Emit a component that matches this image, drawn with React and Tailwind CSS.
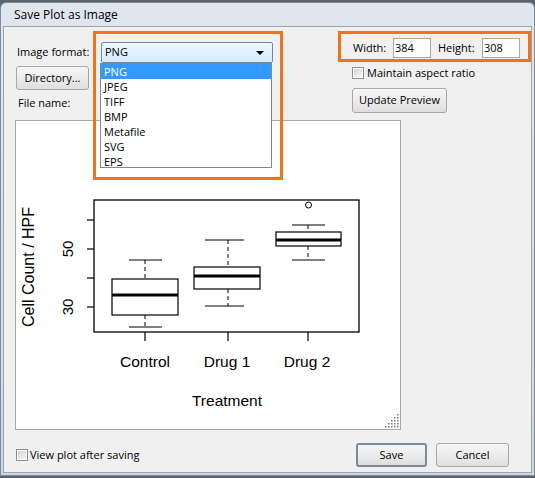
import React from "react";

const FONT = { fontFamily: '"Open Sans", "Noto Sans", sans-serif' };

function Btn({ children, className = "", def = false }) {
  return (
    <div
      className={
        "flex items-center justify-center rounded-[3px] text-[11px] text-black bg-gradient-to-b from-[#f6f6f6] via-[#ececec] to-[#dedede] " +
        (def ? "border-2 border-[#7d8a96] " : "border border-[#a7a7a7] ") +
        className
      }
    >
      {children}
    </div>
  );
}

function Check() {
  return (
    <div className="w-[12px] h-[12px] border border-[#8e8f8f] bg-white p-[1px] shrink-0">
      <div className="w-full h-full bg-gradient-to-br from-[#d4d4d4] to-[#f5f5f5]" />
    </div>
  );
}

function Plot() {
  const dash = "4 3";
  return (
    <svg
      width="384"
      height="308"
      viewBox="15 121 384 308"
      className="absolute left-0 top-0"
      style={{ fontFamily: '"Liberation Sans", Arial, sans-serif' }}
    >
      <rect x="93" y="200" width="265" height="132" fill="none" stroke="#000" strokeWidth="1.3" />
      {[220, 249, 278, 307].map((y) => (
        <line key={y} x1="86" y1={y} x2="93" y2={y} stroke="#000" strokeWidth="1.2" />
      ))}
      <text x="72" y="249" fontSize="15" textAnchor="middle" transform="rotate(-90 72 249)">50</text>
      <text x="72" y="307" fontSize="15" textAnchor="middle" transform="rotate(-90 72 307)">30</text>
      <text x="33" y="267" fontSize="16" textAnchor="middle" transform="rotate(-90 33 267)">Cell Count / HPF</text>
      {[144, 227, 307].map((x) => (
        <line key={x} x1={x} y1="332" x2={x} y2="341" stroke="#000" strokeWidth="1.2" />
      ))}
      <text x="144" y="367" fontSize="15.5" textAnchor="middle">Control</text>
      <text x="226" y="367" fontSize="15.5" textAnchor="middle">Drug 1</text>
      <text x="306" y="367" fontSize="15.5" textAnchor="middle">Drug 2</text>
      <text x="226" y="406" fontSize="15.5" textAnchor="middle">Treatment</text>

      {/* Control */}
      <line x1="144" y1="260" x2="144" y2="279" stroke="#000" strokeDasharray={dash} />
      <line x1="144" y1="315" x2="144" y2="327" stroke="#000" strokeDasharray={dash} />
      <line x1="128" y1="260" x2="161" y2="260" stroke="#000" />
      <line x1="128" y1="327" x2="161" y2="327" stroke="#000" />
      <rect x="111" y="279" width="66" height="36" fill="#fff" stroke="#000" strokeWidth="1.2" />
      <line x1="111" y1="295" x2="177" y2="295" stroke="#000" strokeWidth="3" />

      {/* Drug 1 */}
      <line x1="227" y1="240" x2="227" y2="267" stroke="#000" strokeDasharray={dash} />
      <line x1="227" y1="289" x2="227" y2="306" stroke="#000" strokeDasharray={dash} />
      <line x1="204" y1="240" x2="243" y2="240" stroke="#000" />
      <line x1="204" y1="306" x2="243" y2="306" stroke="#000" />
      <rect x="193" y="267" width="66" height="22" fill="#fff" stroke="#000" strokeWidth="1.2" />
      <line x1="193" y1="276" x2="259" y2="276" stroke="#000" strokeWidth="3" />

      {/* Drug 2 */}
      <line x1="307" y1="225" x2="307" y2="232" stroke="#000" strokeDasharray={dash} />
      <line x1="307" y1="246" x2="307" y2="260" stroke="#000" strokeDasharray={dash} />
      <line x1="291" y1="225" x2="324" y2="225" stroke="#000" />
      <line x1="291" y1="260" x2="324" y2="260" stroke="#000" />
      <rect x="275" y="232" width="65" height="14" fill="#fff" stroke="#000" strokeWidth="1.2" />
      <line x1="275" y1="240" x2="340" y2="240" stroke="#000" strokeWidth="3" />
      <circle cx="307.5" cy="205" r="3" fill="none" stroke="#000" strokeWidth="1" />

      {/* resize grip */}
      {[
        [396, 414], [393, 417], [396, 417], [390, 420], [393, 420], [396, 420],
        [387, 423], [390, 423], [393, 423], [396, 423], [384, 426], [387, 426],
        [390, 426], [393, 426], [396, 426],
      ].map(([x, y], i) => (
        <rect key={i} x={x} y={y} width="1.5" height="1.5" fill="#7a7a7a" />
      ))}
    </svg>
  );
}

export default function App() {
  const items = ["PNG", "JPEG", "TIFF", "BMP", "Metafile", "SVG", "EPS"];
  return (
    <div className="w-[535px] h-[478px] bg-[#5b636d] overflow-hidden relative" style={FONT}>
      <div className="absolute left-0 top-[2px] w-[535px] h-[474px] rounded-t-[6px] border border-[#7f8c9b] bg-gradient-to-b from-[#dfe6ee] to-[#cdd7e3] flex flex-col px-[2px] pb-[2px]">
        <div className="h-[23px] flex items-center pl-[11px] text-[12px] text-black shrink-0">
          Save Plot as Image
        </div>
        <div className="flex-1 bg-[#f0f0f0] border border-[#9aa5b2] relative flex flex-col">
          <div className="flex pl-[11px] pt-[15px]">
            {/* left column */}
            <div className="w-[386px] flex flex-col">
              <div className="flex items-center h-[21px]">
                <span className="text-[11px] text-black ml-[2px] w-[84px]">Image format:</span>
                <div className="w-[172px] h-[21px] rounded-[2px] border border-[#6f8aa6] bg-gradient-to-b from-[#eef7fd] to-[#d3ecfb] flex items-center justify-between px-[3px] text-[11px]">
                  <span>PNG</span>
                  <span className="w-0 h-0 border-l-[4px] border-r-[4px] border-t-[4px] border-l-transparent border-r-transparent border-t-black mr-[5px]" />
                </div>
              </div>
              <Btn className="w-[73px] h-[24px] mt-[3px] ml-[1px]">Directory...</Btn>
              <div className="text-[11px] text-black ml-[3px] mt-[4px] h-[18px] leading-[18px]">File name:</div>
              <div className="relative w-[386px] h-[310px] mt-[8px] bg-white border border-[#a8a8a8]">
                <Plot />
              </div>
            </div>
            {/* right column */}
            <div className="flex flex-col ml-[-49px] -mt-[4px]">
              <div className="flex items-center h-[20px] text-[11px]">
                <span className="ml-[1px] w-[40px]">Width:</span>
                <div className="w-[38px] h-[20px] border border-[#a9a9a9] bg-white px-[1px] flex items-center">384</div>
                <span className="ml-[7px] w-[44px]">Height:</span>
                <div className="w-[38px] h-[20px] border border-[#a9a9a9] bg-white px-[1px] flex items-center">308</div>
              </div>
              <div className="flex items-center mt-[9px] text-[11px]">
                <Check />
                <span className="ml-[3px] leading-[12px]">Maintain aspect ratio</span>
              </div>
              <Btn className="w-[95px] h-[25px] mt-[9px]">Update Preview</Btn>
            </div>
          </div>
          <div className="flex items-center mt-[13px] pl-[12px] pr-[22px]">
            <Check />
            <span className="ml-[2px] text-[11px] leading-[12px]">View plot after saving</span>
            <div className="flex-1" />
            <Btn def className="w-[71px] h-[24px]">Save</Btn>
            <Btn className="w-[73px] h-[24px] ml-[9px]">Cancel</Btn>
          </div>

          {/* dropdown list */}
          <div className="absolute left-[96px] top-[36px] w-[172px] h-[105px] bg-white border border-[#828790] flex flex-col text-[11px]">
            {items.map((it, i) => (
              <div
                key={it}
                className={
                  "h-[15px] leading-[15px] pl-[3px] " +
                  (i === 0 ? "bg-[#3399ff] text-white" : "text-black")
                }
              >
                {it}
              </div>
            ))}
          </div>
        </div>
      </div>
      {/* annotation boxes */}
      <div className="absolute left-[93px] top-[31px] w-[190px] h-[149px] border-[3px] border-[#ec7420]" />
      <div className="absolute left-[338px] top-[31px] w-[193px] h-[31px] border-[3px] border-[#ec7420]" />
    </div>
  );
}
